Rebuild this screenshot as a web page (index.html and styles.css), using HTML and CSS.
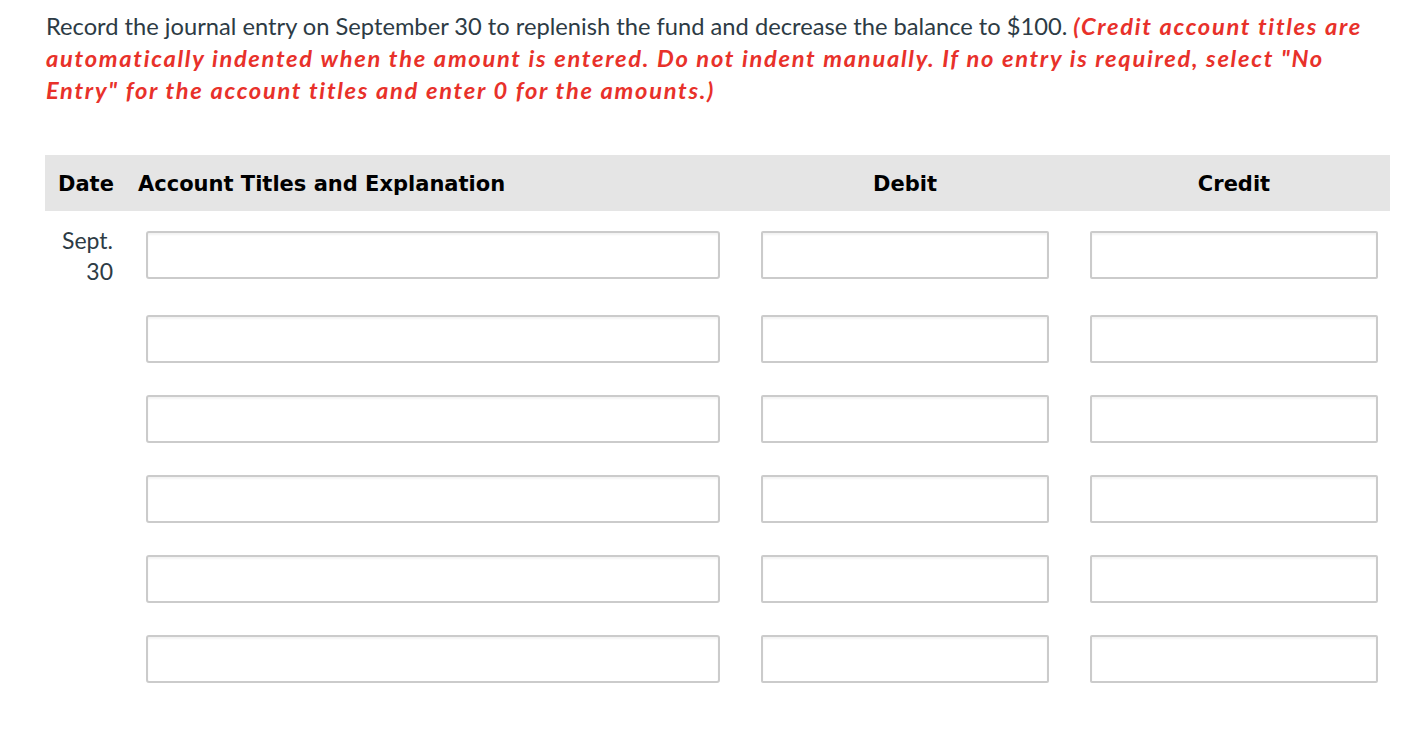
FILE: index.html
```html
<!DOCTYPE html>
<html>
<head>
<meta charset="utf-8">
<link rel="stylesheet" href="styles.css">
</head>
<body>
<div class="page">
  <p class="question">Record the journal entry on September 30 to replenish the fund and decrease the balance to $100. <em class="note">(Credit account titles are automatically indented when the amount is entered. Do not indent manually. If no entry is required, select "No Entry" for the account titles and enter 0 for the amounts.)</em></p>

  <div class="journal">
    <div class="head">
      <div class="h-date">Date</div>
      <div class="h-acct">Account Titles and Explanation</div>
      <div class="h-num">Debit</div>
      <div class="h-num h-credit">Credit</div>
    </div>

    <div class="row first">
      <div class="date">Sept.<br>30</div>
      <div class="c-acct"><input class="inp acct" type="text"></div>
      <div class="c-debit"><input class="inp num" type="text"></div>
      <div class="c-credit"><input class="inp num" type="text"></div>
    </div>
    <div class="row">
      <div class="date"></div>
      <div class="c-acct"><input class="inp acct" type="text"></div>
      <div class="c-debit"><input class="inp num" type="text"></div>
      <div class="c-credit"><input class="inp num" type="text"></div>
    </div>
    <div class="row">
      <div class="date"></div>
      <div class="c-acct"><input class="inp acct" type="text"></div>
      <div class="c-debit"><input class="inp num" type="text"></div>
      <div class="c-credit"><input class="inp num" type="text"></div>
    </div>
    <div class="row">
      <div class="date"></div>
      <div class="c-acct"><input class="inp acct" type="text"></div>
      <div class="c-debit"><input class="inp num" type="text"></div>
      <div class="c-credit"><input class="inp num" type="text"></div>
    </div>
    <div class="row">
      <div class="date"></div>
      <div class="c-acct"><input class="inp acct" type="text"></div>
      <div class="c-debit"><input class="inp num" type="text"></div>
      <div class="c-credit"><input class="inp num" type="text"></div>
    </div>
    <div class="row">
      <div class="date"></div>
      <div class="c-acct"><input class="inp acct" type="text"></div>
      <div class="c-debit"><input class="inp num" type="text"></div>
      <div class="c-credit"><input class="inp num" type="text"></div>
    </div>
  </div>
</div>
</body>
</html>
```

FILE: styles.css
```css
html, body {
  margin: 0;
  padding: 0;
  background: #fff;
}
body {
  font-family: Lato, "Open Sans", sans-serif;
  color: #2d3b45;
}
.page {
  padding: 10px 34px 0 45px;
}
.question {
  margin: 0;
  font-size: 23.7px;
  line-height: 32px;
  padding-left: 1px;
  width: 1330px;
}
.note {
  color: #e8312a;
  font-weight: bold;
  font-style: italic;
  letter-spacing: 1.7px;
}
.journal {
  margin-top: 49px;
  width: 1345px;
}
.head {
  display: grid;
  grid-template-columns: 88px 607px 330px 320px;
  height: 56px;
  padding-top: 2px;
  box-sizing: border-box;
  align-items: center;
  background: #e5e5e5;
  font-family: "DejaVu Sans", sans-serif;
  font-weight: bold;
  font-size: 21px;
  color: #000;
}
.h-date {
  padding-left: 13px;
}
.h-acct {
  padding-left: 5px;
}
.h-num {
  text-align: center;
}
.h-credit {
  padding-left: 8px;
}
.row {
  display: grid;
  grid-template-columns: 88px 607px 330px 320px;
  height: 80px;
  align-items: start;
}
.row.first {
  height: 88px;
}
.row .c-acct,
.row .c-debit,
.row .c-credit {
  padding-top: 16px;
}
.row.first .c-acct,
.row.first .c-debit,
.row.first .c-credit {
  padding-top: 20px;
}
.date {
  text-align: right;
  padding-right: 20px;
  padding-top: 14px;
  font-size: 23px;
  line-height: 31px;
  color: #2d3b45;
}
.c-acct {
  padding-left: 13px;
}
.c-debit {
  padding-left: 21px;
}
.c-credit {
  padding-left: 20px;
}
.inp {
  box-sizing: border-box;
  display: block;
  height: 48px;
  margin: 0;
  border: 2px solid #cbcbcb;
  border-radius: 3px;
  background: #fff;
  box-shadow: inset 0 2px 2px rgba(0,0,0,0.05);
  font-family: Lato, sans-serif;
  font-size: 18px;
  outline: none;
}
.acct {
  width: 574px;
}
.num {
  width: 288px;
  border-radius: 2px;
}
```
